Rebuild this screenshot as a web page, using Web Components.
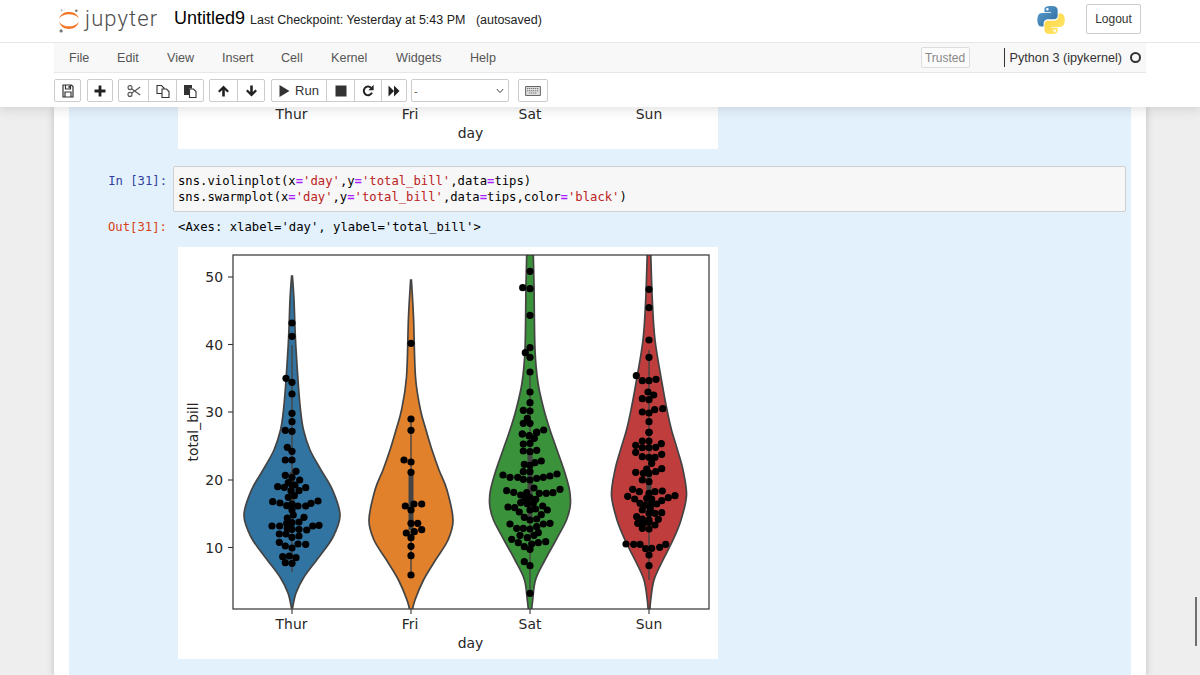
<!DOCTYPE html>
<html lang="en">
<head>
<meta charset="utf-8">
<title>Untitled9</title>
<style>
    html, body { margin: 0; height: 100%; overflow: hidden; }
    body { background: #eeeeee; font-family: "Liberation Sans", Arial, sans-serif; color: #333; }
    .site { height: 568px; overflow: hidden; }
    .notebook { width: 1062px; height: 568px; margin-left: 54px; padding: 0 15px; background: #fff; box-shadow: 0 0 6px 1px rgba(87, 87, 87, 0.25); }
    .selected { height: 568px; background: #e3f1fc; }
    jp-scroll-mark { position: absolute; left: 1195px; top: 597px; }
</style>
</head>
<body>
<jp-header></jp-header>
<div class="site">
    <div class="notebook">
        <div class="selected">
            <jp-output-image crop></jp-output-image>
            <jp-cell count="31" style="margin-top:17px">
                <span><b>sns</b>.violinplot(x<i>=</i><u>'day'</u>,y<i>=</i><u>'total_bill'</u>,data<i>=</i>tips)</span>
                <span>sns.swarmplot(x<i>=</i><u>'day'</u>,y<i>=</i><u>'total_bill'</u>,data<i>=</i>tips,color<i>=</i><u>'black'</u>)</span>
            </jp-cell>
            <jp-out count="31">&lt;Axes: xlabel='day', ylabel='total_bill'&gt;</jp-out>
            <jp-output-image></jp-output-image>
        </div>
    </div>
</div>
<jp-scroll-mark></jp-scroll-mark>

<script>
"use strict";

class JpLogo extends HTMLElement {
    constructor() {
        super();
        this.attachShadow({ mode: "open" });
        this.shadowRoot.innerHTML = String.raw`<style>
            :host{ display:flex; align-items:center; width:100px; height:38px; position:relative; top:-2px; }
            svg{ display:block; flex:none; margin-right:5px; }
            span{ font:300 22px Roboto, "Open Sans", sans-serif; letter-spacing:1.1px; color:#4e4e4e; position:relative; top:-1px; }
        </style>
        <svg width="22" height="28" viewBox="0 0 24 30">
            <path d="M1.2 14.2C3 9.4 7 7.3 12 7.3s9 2.1 10.8 6.9C20 11.2 16.4 9.9 12 9.9S4 11.2 1.2 14.2Z" fill="#f37726"/>
            <path d="M1.2 18.2C3 23.4 7 25.8 12 25.8s9-2.4 10.8-7.6C20 21.5 16.4 23 12 23S4 21.5 1.2 18.2Z" fill="#f37726"/>
            <circle cx="20" cy="6" r="1.4" fill="#767677"/>
            <circle cx="4" cy="5.5" r="1" fill="#9e9e9e"/>
            <circle cx="3.4" cy="28" r="1.7" fill="#767677"/>
        </svg><span>jupyter</span>`;
    }
}
customElements.define("jp-logo", JpLogo);

class JpHeader extends HTMLElement {
    constructor() {
        super();
        this.attachShadow({ mode: "open" });
        this.shadowRoot.innerHTML = String.raw`<style>
            :host{
                display:block; position:relative; z-index:2; height:107px; background:#fff;
                box-shadow:0 0 12px 1px rgba(87,87,87,0.22); color:#000;
            }
            .top{ display:flex; align-items:center; height:42px; padding:0 59px 0 58px; border-bottom:1px solid #e7e7e7; box-sizing:content-box; }
            .name{ font-size:18px; margin-left:16px; position:relative; top:-3px; }
            .check{ font-size:12.5px; margin-left:5px; color:#222; white-space:pre; position:relative; top:-1px; }
            .py{ display:block; margin-left:auto; margin-right:21px; position:relative; top:-1px; }
            .logout{
                display:flex; align-items:center; justify-content:center; width:53px; height:28px;
                border:1px solid #ccc; border-radius:2px; font-size:12px; color:#333; position:relative; top:-2px;
            }
        </style>
        <div class="top">
            <jp-logo></jp-logo>
            <div class="name">Untitled9</div>
            <div class="check">Last Checkpoint: Yesterday at 5:43 PM   (autosaved)</div>
            <svg class="py" width="28" height="28" viewBox="0 0 110 111">
                <defs>
                    <linearGradient id="b" x1="0" y1="0" x2="1" y2="1"><stop offset="0" stop-color="#5a9fd4"/><stop offset="1" stop-color="#306998"/></linearGradient>
                    <linearGradient id="y" x1="1" y1="1" x2="0" y2="0"><stop offset="0" stop-color="#ffd43b"/><stop offset="1" stop-color="#ffe873"/></linearGradient>
                </defs>
                <path fill="url(#b)" fill-rule="evenodd" d="M54.9 0C50.3 0 46 .4 42.2 1.1 31 3.1 29 7.2 29 14.8v10h26.2v3.3H19.1c-7.6 0-14.3 4.6-16.4 13.3-2.4 9.9-2.5 16.1 0 26.5 1.9 7.7 6.3 13.2 13.9 13.2h9v-12c0-8.6 7.5-16.2 16.4-16.2h26.2c7.3 0 13.1-6 13.1-13.3V14.8c0-7.1-6-12.4-13.1-13.6C63.7.4 59 0 54.9 0ZM40.7 8.1a4.95 4.95 0 1 1 0 9.9 4.95 4.95 0 1 1 0-9.9Z"/>
                <path fill="url(#y)" fill-rule="evenodd" transform="rotate(180 55.2 55.5)" d="M54.9 0C50.3 0 46 .4 42.2 1.1 31 3.1 29 7.2 29 14.8v10h26.2v3.3H19.1c-7.6 0-14.3 4.6-16.4 13.3-2.4 9.9-2.5 16.1 0 26.5 1.9 7.7 6.3 13.2 13.9 13.2h9v-12c0-8.6 7.5-16.2 16.4-16.2h26.2c7.3 0 13.1-6 13.1-13.3V14.8c0-7.1-6-12.4-13.1-13.6C63.7.4 59 0 54.9 0ZM40.7 8.1a4.95 4.95 0 1 1 0 9.9 4.95 4.95 0 1 1 0-9.9Z"/>
            </svg>
            <div class="logout">Logout</div>
        </div>
        <jp-menubar></jp-menubar>
        <jp-toolbar></jp-toolbar>`;
    }
}
customElements.define("jp-header", JpHeader);

class JpMenubar extends HTMLElement {
    constructor() {
        super();
        this.attachShadow({ mode: "open" });
        const items = [["File", 48], ["Edit", 50], ["View", 55], ["Insert", 59], ["Cell", 50], ["Kernel", 65], ["Widgets", 74], ["Help", 40]];
        this.shadowRoot.innerHTML = String.raw`<style>
            :host{
                display:flex; align-items:center; box-sizing:border-box; width:1092px; height:30px; margin-left:54px;
                padding:0 5px 0 15px; background:#f8f8f8; border-bottom:1px solid #e7e7e7; font-size:12.6px; color:#555;
            }
            span{ display:block; flex:none; }
            .trusted{
                margin-left:auto; display:flex; align-items:center; justify-content:center; width:49px; height:21px; box-sizing:border-box;
                border:1px solid #ddd; border-radius:2px; background:#fbfbfb; color:#888; font-size:12px;
            }
            .kernel{ display:flex; align-items:center; margin-left:34px; height:19px; border-left:1px solid #333; padding-left:5px; font-size:12.65px; color:#333; }
            .ind{ width:7px; height:7px; border:2px solid #333; border-radius:50%; margin-left:8px; }
        </style>
        ${items.map(([t, w]) => `<span style="width:${w}px">${t}</span>`).join("")}
        <div class="trusted">Trusted</div>
        <div class="kernel">Python 3 (ipykernel)<div class="ind"></div></div>`;
    }
}
customElements.define("jp-menubar", JpMenubar);

class JpToolbar extends HTMLElement {
    constructor() {
        super();
        this.attachShadow({ mode: "open" });
        const svg = (w, body) => `<svg width="${w}" height="14" viewBox="0 0 ${w} 14">${body}</svg>`;
        const btn = (w, body) => `<div class="b" style="width:${w}px">${body}</div>`;
        const ic = {
            save: svg(12, '<path d="M1 1h8.5L11 2.5V13H1Z M3.5 1v4h5V1 M3 13V8h6v5" fill="none" stroke="#333" stroke-width="1.2"/><path d="M6.5 1.8h1.4v2.4H6.5Z" fill="#333"/>'),
            plus: svg(12, '<path d="M4.6 1.5h2.8v4.1h4.1v2.8H7.4v4.1H4.6V8.4H.5V5.6h4.1Z" fill="#222"/>'),
            cut: svg(14, '<g fill="none" stroke="#555" stroke-width="1.1"><circle cx="3" cy="3.6" r="2"/><circle cx="3" cy="10.4" r="2"/><path d="M4.6 4.8 13.2 11M4.6 9.2 13.2 3"/></g>'),
            copy: svg(14, '<g fill="#fff" stroke="#333" stroke-width="1.1"><path d="M1 1.5h4.5L8 4v5.5H1Z"/><path d="M6 5h4.5L13 7.5v6H6Z"/></g>'),
            paste: svg(14, '<path d="M1 1h8v3.5H6V11H1Z" fill="#333"/><path d="M6.5 5h4l2.5 2.5V13.5H6.5Z" fill="#fff" stroke="#333" stroke-width="1.1"/>'),
            up: svg(13, '<path d="M6.5 1.5 12 7 10.4 8.6 7.8 6.1V12.5H5.2V6.1L2.6 8.6 1 7Z" fill="#222"/>'),
            down: svg(13, '<path d="M6.5 12.5 12 7 10.4 5.4 7.8 7.9V1.5H5.2V7.9L2.6 5.4 1 7Z" fill="#222"/>'),
            play: svg(11, '<path d="M.5 1 10.5 7 .5 13Z" fill="#333"/>'),
            stop: svg(12, '<path d="M.5 1.5h11v11H.5Z" fill="#333"/>'),
            redo: svg(12, '<path d="M10 8.7A4.3 4.3 0 1 1 9.2 3.9" fill="none" stroke="#222" stroke-width="2"/><path d="M11.6 .8V6.2H6.4Z" fill="#222"/>'),
            ff: svg(12, '<path d="M.5 1.5 6 7 .5 12.5Z M6 1.5 11.5 7 6 12.5Z" fill="#222"/>'),
            key: svg(16, '<path d="M.6 2.5h14.8v9H.6Z" fill="#ddd" stroke="#666"/><path d="M2 4.5h12M2 6.7h12M4 9h8" stroke="#777" stroke-width="1.1" stroke-dasharray="1.3 .7"/>')
        };
        this.shadowRoot.innerHTML = String.raw`<style>
            :host{ display:flex; align-items:flex-start; height:34px; box-sizing:border-box; padding:6px 0 0 54px; }
            .g{ display:flex; height:22px; border:1px solid #ccc; border-radius:2px; background:#fff; box-sizing:content-box; height:21px; margin-right:5px; }
            .b{ display:flex; align-items:center; justify-content:center; box-sizing:border-box; border-left:1px solid #ccc; font-size:13px; color:#333; gap:5px; }
            .b:first-child{ border-left:0; }
            .sel{ width:96px; position:relative; margin-right:9px; align-items:center; padding-left:2px; box-sizing:border-box; width:98px; height:23px; font-size:11px; color:#555; }
            .sel svg{ position:absolute; right:4px; top:8px; }
            svg{ display:block; }
        </style>
        <div class="g" style="margin-right:6px">${btn(25, ic.save)}</div>
        <div class="g">${btn(24, ic.plus)}</div>
        <div class="g">${btn(29, ic.cut)}${btn(28, ic.copy)}${btn(27, ic.paste)}</div>
        <div class="g" style="margin-right:6px">${btn(27, ic.up)}${btn(27, ic.down)}</div>
        <div class="g" style="margin-right:4px">${btn(54, ic.play + "Run")}${btn(28, ic.stop)}${btn(27, ic.redo)}${btn(25, ic.ff)}</div>
        <div class="g sel">-<svg width="8" height="6" viewBox="0 0 8 6"><path d="M.8 1 4 4.6 7.2 1" fill="none" stroke="#444"/></svg></div>
        <div class="g">${btn(28, ic.key)}</div>`;
    }
}
customElements.define("jp-toolbar", JpToolbar);

class JpCell extends HTMLElement {
    constructor() {
        super();
        this.attachShadow({ mode: "open" });
        this.shadowRoot.innerHTML = String.raw`<style>
            :host{ display:flex; font:12.22px/16px "DejaVu Sans Mono", monospace; color:#000; }
            .p{ width:98px; flex:none; text-align:right; color:#303f9f; padding-top:7px; box-sizing:border-box; }
            .box{
                width:953px; height:46px; margin-left:6px; box-sizing:border-box; padding:6px 4px;
                background:#f7f7f7; border:1px solid #cfcfcf; border-radius:2px;
            }
            ::slotted(span){ display:block; white-space:pre; }
        </style>
        <div class="p">In [${this.getAttribute("count")}]:</div>
        <div class="box"><slot></slot></div>`;
    }
}
customElements.define("jp-cell", JpCell);

class JpOut extends HTMLElement {
    constructor() {
        super();
        this.attachShadow({ mode: "open" });
        this.shadowRoot.innerHTML = String.raw`<style>
            :host{ display:flex; font:12.27px/16px "DejaVu Sans Mono", monospace; color:#000; margin-top:7px; height:28px; }
            .p{ width:98px; flex:none; text-align:right; color:#d84315; }
            .t{ margin-left:11px; white-space:pre; }
        </style>
        <div class="p">Out[${this.getAttribute("count")}]:</div>
        <div class="t"><slot></slot></div>`;
    }
}
customElements.define("jp-out", JpOut);

// points read off the picture: [x, y] in page pixels, swarm dots per day
const fromZoom = (ox, oy, pts) => pts.map(([x, y]) => [ox + x / 3, oy + y / 3]);
const DAYS = [
    {
        name: "Thur", cx: 292, fill: "#3274a1", whisker: [345, 572], box: [472, 505],
        profile: [[276, .4], [300, 2], [340, 3.5], [380, 6], [410, 8.5], [430, 11.5], [450, 18], [470, 29], [490, 40.5], [515, 48], [537, 41], [557, 27], [577, 12], [593, 4], [608, .5]],
        dots: fromZoom(230, 250, [[186,219],[186,259],[168,385],[186,397],[186,432],[186,490],[186,515],[166,541],[186,544]]).concat(fromZoom(230, 430, [[172,52],[186,64],[166,90],[186,90],[198,124],[166,136],[186,142],[209,150],[175,158],[143,170],[163,172],[186,165],[195,165],[227,173],[183,182],[207,182],[175,202],[193,197],[128,215],[150,219],[170,227],[186,222],[204,228],[227,228],[243,220],[264,213],[186,240],[190,255],[172,264],[222,262],[207,276],[186,278],[170,280],[126,288],[149,288],[172,295],[186,298],[207,298],[230,300],[248,288],[267,286],[148,312],[168,312],[186,322],[207,318],[148,337],[166,348],[186,354],[204,342],[227,343],[158,380],[178,378],[198,383],[166,398],[186,400]]))
    },
    {
        name: "Fri", cx: 411, fill: "#e1812c", whisker: [418, 575], box: [473, 530],
        profile: [[280, .4], [317, 2.5], [377, 4.5], [410, 9.5], [430, 15], [450, 21], [470, 28], [490, 36], [520, 42], [540, 37], [560, 24.5], [580, 12.5], [600, 4], [612, .8]],
        dots: fromZoom(230, 250, [[543,280],[543,507],[543,541]]).concat(fromZoom(230, 430, [[522,90],[543,96],[543,127],[526,228],[552,222],[575,222],[543,240],[543,280],[563,280],[575,299],[553,305],[529,309],[543,323],[543,349],[543,377],[543,435]]))
    },
    {
        name: "Sat", cx: 530, fill: "#3a923a", whisker: [372, 590], box: [450, 520],
        profile: [[250, 3.2], [285, 4], [350, 5], [383, 8], [410, 14], [430, 20], [450, 27], [470, 34], [490, 39.5], [505, 40.3], [520, 36.5], [540, 26], [560, 15], [580, 5.5], [600, 2.7], [612, 1.4]],
        dots: fromZoom(470, 250, [[180,64],[158,113],[180,116],[180,196],[180,293],[166,308],[180,322],[180,366],[180,426],[180,458],[160,481],[180,483],[172,505],[160,520],[180,520],[157,552],[178,557],[200,546],[221,540]]).concat(fromZoom(470, 430, [[157,12],[178,18],[200,8],[193,25],[160,42],[180,40],[160,63],[180,65],[200,61],[163,103],[180,106],[195,98],[214,93],[160,125],[180,125],[99,135],[120,142],[143,142],[160,148],[180,150],[200,145],[220,142],[240,138],[261,132],[192,174],[110,182],[131,187],[152,195],[170,188],[208,190],[229,190],[249,188],[270,178],[165,205],[180,203],[197,208],[152,218],[172,222],[190,220],[114,231],[134,233],[148,246],[180,240],[197,237],[218,228],[232,240],[163,262],[180,270],[200,267],[214,254],[120,282],[140,295],[160,295],[180,297],[200,290],[220,282],[240,280],[205,308],[150,316],[172,323],[192,316],[125,328],[145,338],[163,350],[185,342],[205,338],[227,335],[180,358],[163,395],[180,407],[180,490]]))
    },
    {
        name: "Sun", cx: 649, fill: "#c03d3e", whisker: [350, 580], box: [470, 520],
        profile: [[250, 1.6], [300, 3.3], [340, 6], [383, 13], [410, 18], [430, 22.5], [450, 28.5], [470, 34], [495, 37.5], [520, 32], [540, 24], [560, 14], [580, 5], [600, 1.7], [612, .8]],
        dots: fromZoom(470, 250, [[537,118],[537,173],[537,270],[537,322],[499,377],[517,392],[537,392],[558,388],[534,426],[551,435],[517,446],[537,449],[517,486],[537,489],[554,479],[578,476],[537,515],[537,547]]).concat(fromZoom(470, 430, [[537,7],[517,33],[537,33],[574,41],[497,46],[517,53],[537,53],[557,52],[497,67],[517,80],[537,82],[555,82],[575,73],[545,100],[497,127],[530,117],[520,130],[537,130],[557,125],[575,116],[517,150],[537,155],[488,178],[508,185],[537,190],[555,185],[577,183],[473,199],[494,207],[510,220],[530,205],[545,207],[575,212],[595,203],[615,197],[525,225],[545,220],[560,222],[517,240],[541,235],[575,248],[555,250],[537,250],[500,260],[517,267],[537,270],[565,268],[503,280],[520,280],[537,277],[555,285],[517,295],[537,297],[468,342],[491,343],[510,343],[527,356],[545,355],[569,352],[587,343],[537,375],[537,407]]))
    }
];

// Catmull-Rom through the outline, right side going down, left side coming back up
function violinPath(day) {
    const right = day.profile.map(([y, w]) => [day.cx + w, y]);
    const left = day.profile.map(([y, w]) => [day.cx - w, y]).reverse();
    const side = (pts) => {
        let d = "";
        for (let i = 0; i < pts.length - 1; i++) {
            const p0 = pts[i - 1] || pts[i], p1 = pts[i], p2 = pts[i + 1], p3 = pts[i + 2] || p2;
            const c1 = [p1[0] + (p2[0] - p0[0]) / 6, p1[1] + (p2[1] - p0[1]) / 6];
            const c2 = [p2[0] - (p3[0] - p1[0]) / 6, p2[1] - (p3[1] - p1[1]) / 6];
            d += `C${c1[0].toFixed(1)} ${c1[1].toFixed(1)} ${c2[0].toFixed(1)} ${c2[1].toFixed(1)} ${p2[0].toFixed(1)} ${p2[1].toFixed(1)}`;
        }
        return d;
    };
    return `M${right[0][0]} ${right[0][1]}${side(right)}L${left[0][0]} ${left[0][1]}${side(left)}Z`;
}

class JpOutputImage extends HTMLElement {
    constructor() {
        super();
        this.attachShadow({ mode: "open" });
        const crop = this.hasAttribute("crop");
        const h = crop ? 42 : 412;
        const viewTop = crop ? 617 : 247;
        const txt = `font-family="DejaVu Sans" font-size="13.9" fill="#262626"`;
        const xLabels = DAYS.map((d, i) => `<text x="${[291.5, 410, 530, 649][i]}" y="629" text-anchor="middle" ${txt}>${d.name}</text>`).join("") +
            `<text x="470.5" y="648" text-anchor="middle" ${txt}>day</text>`;
        let body = xLabels;
        if (!crop) {
            const yTicks = [[50, 277], [40, 344.5], [30, 412], [20, 480], [10, 547.5]];
            body = `<clipPath id="axes"><rect x="233" y="255" width="476" height="354"/></clipPath>
                <g clip-path="url(#axes)">` +
                DAYS.map((d) => `<path d="${violinPath(d)}" fill="${d.fill}" stroke="#444" stroke-width="1.7"/>
                    <path d="M${d.cx} ${d.whisker[0]}V${d.whisker[1]}" stroke="#444" stroke-width="1.4"/>
                    <path d="M${d.cx} ${d.box[0]}V${d.box[1]}" stroke="#444" stroke-width="5"/>` +
                    d.dots.map(([x, y]) => `<circle cx="${x.toFixed(1)}" cy="${y.toFixed(1)}" r="3.6" fill="#000"/>`).join("")).join("") +
                `</g>
                <rect x="233" y="255" width="476" height="354" fill="none" stroke="#333" stroke-width="1.2"/>` +
                DAYS.map((d, i) => `<path d="M${[292, 411, 530, 649][i]} 609v5" stroke="#333" stroke-width="1.1"/>`).join("") +
                yTicks.map(([v, y]) => `<path d="M233 ${y}h-5" stroke="#333" stroke-width="1.1"/><text x="223" y="${y + 5}" text-anchor="end" ${txt}>${v}</text>`).join("") +
                `<text transform="translate(198 432) rotate(-90)" text-anchor="middle" ${txt}>total_bill</text>` +
                xLabels;
        }
        this.shadowRoot.innerHTML = String.raw`<style>
            :host{ display:block; width:540px; height:${h}px; margin-left:109px; background:#fff; }
            svg{ display:block; }
        </style>
        <svg width="540" height="${h}" viewBox="178 ${viewTop} 540 ${h}">${body}</svg>`;
    }
}
customElements.define("jp-output-image", JpOutputImage);

class JpScrollMark extends HTMLElement {
    constructor() {
        super();
        this.attachShadow({ mode: "open" });
        this.shadowRoot.innerHTML = String.raw`<style>
            :host{ display:block; width:2px; height:49px; background:#6f6f6f; }
        </style>`;
    }
}
customElements.define("jp-scroll-mark", JpScrollMark);
</script>
<style>
    /* code colours, these spans are slotted into jp-cell from the page */
    jp-cell b { font-weight: normal; }
    jp-cell i { font-style: normal; color: #aa22ff; font-weight: bold; }
    jp-cell u { text-decoration: none; color: #ba2121; }
</style>
</body>
</html>
